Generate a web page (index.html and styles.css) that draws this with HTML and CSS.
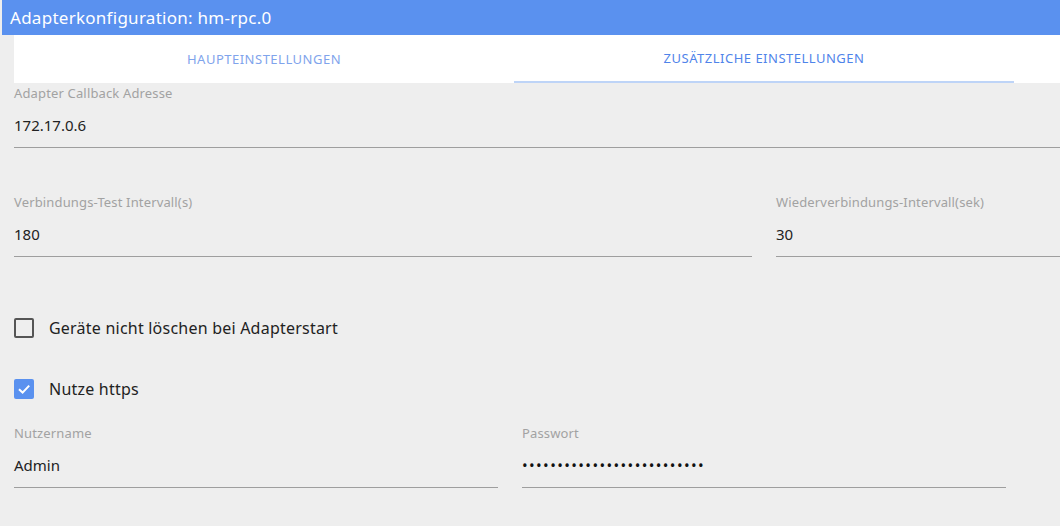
FILE: index.html
```html
<!DOCTYPE html>
<html lang="de">
<head>
<meta charset="utf-8">
<title>Adapterkonfiguration</title>
<link rel="stylesheet" href="styles.css">
</head>
<body>
<div class="page">
  <header class="titlebar">Adapterkonfiguration: hm-rpc.0</header>
  <nav class="tabs">
    <div class="tab">HAUPTEINSTELLUNGEN</div>
    <div class="tab active">ZUSÄTZLICHE EINSTELLUNGEN</div>
  </nav>
  <main class="content">
    <div class="row row-first">
      <div class="field full">
        <label class="label">Adapter Callback Adresse</label>
        <div class="value">172.17.0.6</div>
      </div>
    </div>
    <div class="row row-two">
      <div class="field w738">
        <label class="label">Verbindungs-Test Intervall(s)</label>
        <div class="value">180</div>
      </div>
      <div class="field grow">
        <label class="label">Wiederverbindungs-Intervall(sek)</label>
        <div class="value">30</div>
      </div>
    </div>
    <div class="check check-first">
      <span class="box"></span>
      <span class="check-label">Geräte nicht löschen bei Adapterstart</span>
    </div>
    <div class="check check-second">
      <span class="box checked"><svg viewBox="0 0 20 20" width="20" height="20"><path d="M5 10.2 L8.6 13.6 L15.2 6.6" fill="none" stroke="#fff" stroke-width="2"/></svg></span>
      <span class="check-label">Nutze https</span>
    </div>
    <div class="row row-three">
      <div class="field w484">
        <label class="label">Nutzername</label>
        <div class="value">Admin</div>
      </div>
      <div class="field w484">
        <label class="label">Passwort</label>
        <div class="value dots">••••••••••••••••••••••••••</div>
      </div>
    </div>
  </main>
</div>
</body>
</html>
```
FILE: styles.css
```css
html, body {
  margin: 0;
  padding: 0;
  background: #eeeeee;
}
body {
  font-family: "Noto Sans", "Open Sans", sans-serif;
  width: 1060px;
  height: 526px;
  overflow: hidden;
}
.page {
  padding-left: 2px;
}
.titlebar {
  height: 35px;
  background: #5a91ef;
  color: #ffffff;
  font-size: 17px;
  line-height: 35px;
  padding-left: 8px;
  letter-spacing: 0.27px;
  white-space: nowrap;
}
.tabs {
  display: flex;
  margin-left: 12px;
  background: #ffffff;
  height: 48px;
}
.tab {
  width: 500px;
  box-sizing: border-box;
  text-align: center;
  font-size: 13px;
  line-height: 48px;
  color: #7fa4ec;
  letter-spacing: 0.5px;
}
.tab.active {
  color: #4f84ea;
  border-bottom: 2px solid #bed4f7;
  line-height: 46px;
}
.content {
  padding-left: 12px;
  padding-top: 1px;
}
.row {
  display: flex;
  gap: 24px;
}
.field {
  display: flex;
  flex-direction: column;
  border-bottom: 1px solid #9e9e9e;
  box-sizing: border-box;
}
.full { flex: 1; }
.grow { flex: 1; }
.w738 { width: 738px; }
.w484 { width: 484px; }
.label {
  font-size: 13px;
  color: #a2a2a2;
  line-height: 18px;
  letter-spacing: 0.15px;
}
.value {
  font-size: 15px;
  color: #222222;
  line-height: 20px;
  margin-top: 13px;
  margin-bottom: 12px;
}
.row-two {
  margin-top: 45px;
}
.row-three {
  margin-top: 25px;
}
.check {
  display: flex;
  align-items: center;
  gap: 15px;
  height: 20px;
}
.check-first { margin-top: 61px; }
.check-second { margin-top: 41px; }
.box {
  width: 20px;
  height: 20px;
  box-sizing: border-box;
  border: 2px solid #555555;
  border-radius: 2px;
  display: block;
}
.box.checked {
  border: none;
  background: #5a91ef;
}
.box svg { display: block; }
.check-label {
  font-size: 16px;
  color: #222222;
  letter-spacing: 0.22px;
}
.dots {
  font-size: 15px;
  letter-spacing: 1.4px;
  color: #111111;
}
```
